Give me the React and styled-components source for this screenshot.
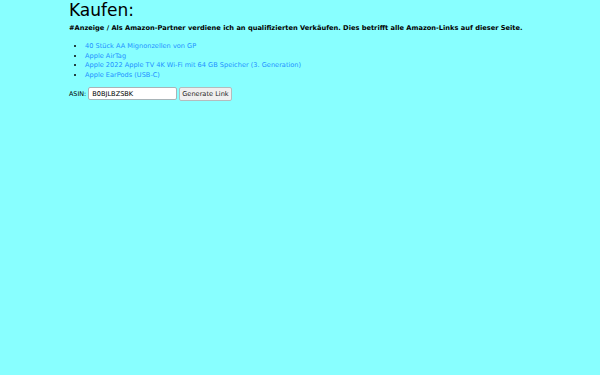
import React from "react";
import styled, { createGlobalStyle } from "styled-components";

const Global = createGlobalStyle`
  html, body { margin: 0; padding: 0; background: #88ffff; }
  body { font-family: "DejaVu Sans", sans-serif; color: #000; }
`;

const Page = styled.main`
  min-height: 375px;
  padding: 0 0 0 69px;
  box-sizing: border-box;
`;

const Title = styled.h1`
  margin: 0;
  font-size: 17px;
  font-weight: normal;
  line-height: 20px;
`;

const Notice = styled.p`
  margin: 4px 0 9px;
  font-size: 6.65px;
  font-weight: bold;
  line-height: 9px;
`;

const List = styled.ul`
  margin: 0 0 6px;
  padding-left: 16px;
  font-size: 6.6px;
  line-height: 9.7px;
`;

const Item = styled.li``;

const Link = styled.a`
  color: #1e90ff;
  text-decoration: none;
`;

const Form = styled.form`
  display: flex;
  align-items: center;
  gap: 2px;
  font-size: 6.4px;
`;

const Label = styled.label`
  margin-right: 0;
`;

const Input = styled.input`
  width: 89px;
  height: 13px;
  box-sizing: border-box;
  border: 1px solid #a8b4b8;
  border-radius: 2px;
  padding: 0 3px;
  font-family: "DejaVu Sans", sans-serif;
  font-size: 6.6px;
  color: #000;
  background: #fff;
`;

const Button = styled.button`
  height: 14px;
  box-sizing: border-box;
  border: 1px solid #b4bcbe;
  border-radius: 2px;
  background: #efefef;
  padding: 0 2px;
  font-family: "DejaVu Sans", sans-serif;
  font-size: 6.6px;
  color: #222;
`;

const items = [
  "40 Stück AA Mignonzellen von GP",
  "Apple AirTag",
  "Apple 2022 Apple TV 4K Wi‑Fi mit 64 GB Speicher (3. Generation)",
  "Apple EarPods (USB‑C)",
];

export default function App() {
  return (
    <>
      <Global />
      <Page>
        <Title>Kaufen:</Title>
        <Notice>
          #Anzeige / Als Amazon-Partner verdiene ich an qualifizierten Verkäufen. Dies betrifft alle Amazon-Links auf dieser Seite.
        </Notice>
        <List>
          {items.map((t) => (
            <Item key={t}>
              <Link href="#">{t}</Link>
            </Item>
          ))}
        </List>
        <Form onSubmit={(e) => e.preventDefault()}>
          <Label htmlFor="asin">ASIN:</Label>
          <Input id="asin" defaultValue="B0BJLBZSBK" />
          <Button type="submit">Generate Link</Button>
        </Form>
      </Page>
    </>
  );
}
